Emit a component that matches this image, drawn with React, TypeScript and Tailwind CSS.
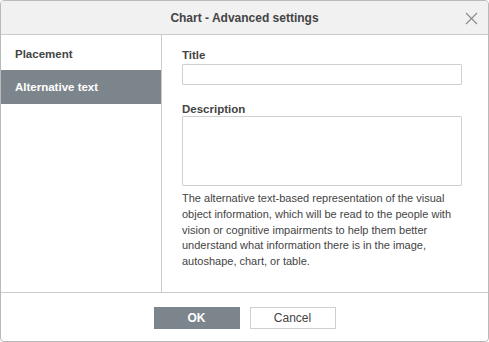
import React from "react";

export default function App() {
  const font = { fontFamily: '"Liberation Sans", Arial, sans-serif' };
  return (
    <div className="w-[489px] h-[342px] bg-white" style={font}>
      <div className="w-[489px] h-[342px] border border-[#b9b9b9] rounded-[4px] flex flex-col overflow-hidden bg-white">
        <div className="relative h-[34px] shrink-0 bg-[#f1f1f1] border-b border-[#cbcbcb] flex items-center justify-center">
          <span className="text-[12px] font-bold text-[#444444]">Chart - Advanced settings</span>
          <svg className="absolute left-[464px] top-[11px]" width="13" height="13" viewBox="0 0 13 13">
            <path d="M1 1 L12 12 M12 1 L1 12" stroke="#8a8a8a" strokeWidth="1.1" fill="none" />
          </svg>
        </div>
        <div className="flex h-[257px] shrink-0">
          <div className="w-[161px] shrink-0 border-r border-[#cbcbcb] pt-px">
            <div className="h-[34px] flex items-center pl-[14px] pt-[3px] text-[11.5px] font-bold text-[#444444]">Placement</div>
            <div className="h-[34px] flex items-center pl-[14px] pt-[2px] text-[11.5px] font-bold text-white bg-[#7d858c]">Alternative text</div>
          </div>
          <div className="pl-[20px] pt-[13px] w-[320px]">
            <div className="text-[11.5px] font-bold leading-[14px] text-[#444444] mb-[2px]">Title</div>
            <div className="w-[280px] h-[21px] border border-[#cfcfcf] rounded-[1px]" />
            <div className="mt-[17px] text-[11.5px] font-bold leading-[14px] text-[#444444]">Description</div>
            <div className="w-[280px] h-[70px] border border-[#cfcfcf] rounded-[1px]" />
            <p className="mt-[5px] whitespace-nowrap text-[11px] leading-[15.75px] text-[#444444]">
              The alternative text-based representation of the visual<br />
              object information, which will be read to the people with<br />
              vision or cognitive impairments to help them better<br />
              understand what information there is in the image,<br />
              autoshape, chart, or table.
            </p>
          </div>
        </div>
        <div className="flex-1 border-t border-[#cbcbcb] flex justify-center gap-[10px] pt-[14px]">
          <button className="w-[86px] h-[22px] bg-[#7d858c] text-white text-[12px] font-bold">OK</button>
          <button className="w-[86px] h-[22px] bg-white border border-[#cfcfcf] text-[#444444] text-[12px]">Cancel</button>
        </div>
      </div>
    </div>
  );
}
